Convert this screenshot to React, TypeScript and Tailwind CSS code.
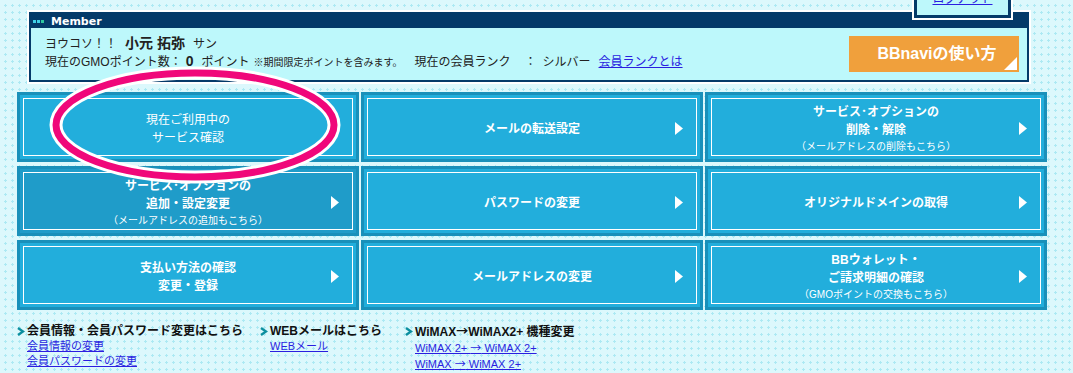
import React from "react"

type Tile = {
  lines: string[]
  sub?: string
  light?: boolean
  hover?: boolean
}

const tiles: Tile[] = [
  { lines: ["現在ご利用中の", "サービス確認"], light: true },
  { lines: ["メールの転送設定"] },
  { lines: ["サービス･オプションの", "削除・解除"], sub: "（メールアドレスの削除もこちら）" },
  { lines: ["サービス･オプションの", "追加・設定変更"], sub: "（メールアドレスの追加もこちら）", hover: true },
  { lines: ["パスワードの変更"] },
  { lines: ["オリジナルドメインの取得"] },
  { lines: ["支払い方法の確認", "変更・登録"] },
  { lines: ["メールアドレスの変更"] },
  { lines: ["BBウォレット・", "ご請求明細の確認"], sub: "（GMOポイントの交換もこちら）" },
]

const links = [
  { title: "会員情報・会員パスワード変更はこちら", items: ["会員情報の変更", "会員パスワードの変更"], w: "w-[243px]" },
  { title: "WEBメールはこちら", items: ["WEBメール"], w: "w-[145px]" },
  { title: "WiMAX→WiMAX2+ 機種変更", items: ["WiMAX 2+ → WiMAX 2+", "WiMAX → WiMAX 2+"], w: "w-[250px]" },
]

// arrows look wider in the original, so give them the CJK face
function WithArrows({ text }: { text: string }) {
  const parts = text.split("→")
  return (
    <>
      {parts.map((p, i) => (
        <React.Fragment key={i}>
          {i > 0 && <span className="font-['Noto_Sans_CJK_JP',sans-serif]">→</span>}
          {p}
        </React.Fragment>
      ))}
    </>
  )
}

function Arrow() {
  return (
    <svg width="8" height="13" viewBox="0 0 8 13">
      <polygon points="0,0 8,6.5 0,13" fill="#ffffff" />
    </svg>
  )
}

function MenuTile({ tile }: { tile: Tile }) {
  return (
    <div className={`h-[70px] border-[3px] border-[#1990ba] p-[3px] ${tile.hover ? "bg-[#1f9cc9]" : "bg-[#22aedc]"}`}>
      <div className="h-full border border-white grid grid-cols-[24px_1fr_24px] items-center">
        <div />
        <div className="flex flex-col items-center text-white pt-[3px]">
          {tile.lines.map((l) => (
            <div key={l} className={`text-[12px] leading-[18px] ${tile.light ? "font-normal" : "font-bold"}`}>
              {l}
            </div>
          ))}
          {tile.sub && <div className="text-[10px] leading-[16px]">{tile.sub}</div>}
        </div>
        <div className="flex justify-start pl-[3px] pt-[2px]">
          <Arrow />
        </div>
      </div>
    </div>
  )
}

function Chevron() {
  return (
    <svg width="8" height="9" viewBox="0 0 8 9" className="shrink-0 mr-[2px]">
      <polyline points="1,1 6,4.5 1,8" fill="none" stroke="#0c8f9f" strokeWidth="2.4" />
    </svg>
  )
}

export default function App() {
  return (
    <div className="relative w-[1073px] h-[373px] overflow-hidden bg-[#dcf8fc] bg-[radial-gradient(circle,#ace9f3_1.1px,transparent_1.4px)] bg-[length:7px_7px] bg-[position:2px_2px] font-['Liberation_Sans','Noto_Sans_CJK_JP',sans-serif] text-[#222]">
      <div className="pl-[17px] pt-[10px] w-[1047px]">
        {/* Member box */}
        <div className="ml-[10px] w-[1004px] border-2 border-white">
          <div className="border-2 border-[#043a69] bg-[#bdf8fb]">
            <div className="h-[14px] bg-[#043a69] flex items-center pl-[2px] gap-[1px]">
              <span className="w-[3px] h-[3px] bg-[#3fd0e8]" />
              <span className="w-[3px] h-[3px] bg-[#3fd0e8]" />
              <span className="w-[3px] h-[3px] bg-[#2fc7a0]" />
              <span className="ml-[6px] text-white text-[11px] font-bold font-['DejaVu_Sans',sans-serif] leading-none">
                Member
              </span>
            </div>
            <div className="h-[52px] flex items-center justify-between pl-[14px] pr-[8px]">
              <div className="flex flex-col pb-[2px]">
                <div className="flex items-baseline text-[12px] leading-[17px]">
                  <span>ヨウコソ！！</span>
                  <span className="ml-[8px] text-[14px] font-bold">小元 拓弥</span>
                  <span className="ml-[8px]">サン</span>
                </div>
                <div className="flex items-baseline text-[12px] leading-[17px]">
                  <span>現在のGMOポイント数：</span>
                  <span className="ml-[4px] text-[14px] font-bold">0</span>
                  <span className="ml-[8px]">ポイント</span>
                  <span className="ml-[4px] text-[10px]">※期間限定ポイントを含みます。</span>
                  <span className="ml-[12px]">現在の会員ランク</span>
                  <span className="ml-[14px]">：</span>
                  <span className="ml-[6px]">シルバー</span>
                  <a className="ml-[8px] text-[#2a1ee0] underline">会員ランクとは</a>
                </div>
              </div>
              <div className="relative w-[170px] h-[36px] bg-[#f0a03c] flex items-center justify-center pl-[6px]">
                <span className="text-white text-[16px] font-bold">BBnaviの使い方</span>
                <svg width="13" height="13" viewBox="0 0 13 13" className="absolute right-[2px] bottom-[2px]">
                  <polygon points="13,0 13,13 0,13" fill="#ffffff" />
                </svg>
              </div>
            </div>
          </div>
        </div>

        {/* Menu grid */}
        <div className="mt-[8px] grid grid-cols-3 gap-x-[2px] gap-y-[4px]">
          {tiles.map((t, i) => (
            <MenuTile key={i} tile={t} />
          ))}
        </div>

        {/* Links */}
        <div className="mt-[13px] flex">
          {links.map((g) => (
            <div key={g.title} className={`${g.w} flex flex-col`}>
              <div className="flex items-center text-[12px] font-bold leading-[16px] text-[#111]">
                <Chevron />
                <span>
                  <WithArrows text={g.title} />
                </span>
              </div>
              {g.items.map((it) => (
                <a key={it} className="ml-[10px] text-[11px] leading-[15px] text-[#2a1ee0] underline">
                  <WithArrows text={it} />
                </a>
              ))}
            </div>
          ))}
        </div>
      </div>

      {/* Logout tab */}
      <div className="absolute left-[912px] top-[-20px] w-[101px] h-[40px] border-2 border-white">
        <div className="h-full border-[3px] border-[#043a69] bg-[#bdf8fb] flex items-end justify-center pb-[9px]">
          <a className="text-[12px] leading-[14px] text-[#2a1ee0] underline">ログアウト</a>
        </div>
      </div>

      {/* Highlight ellipse */}
      <svg className="absolute left-0 top-0 pointer-events-none" width="1073" height="373" viewBox="0 0 1073 373">
        <ellipse cx="195" cy="125" rx="139" ry="52" fill="none" stroke="#ffffff" strokeWidth="13" />
        <ellipse cx="195" cy="125" rx="139" ry="52" fill="none" stroke="#f0077a" strokeWidth="7" />
      </svg>
    </div>
  )
}
